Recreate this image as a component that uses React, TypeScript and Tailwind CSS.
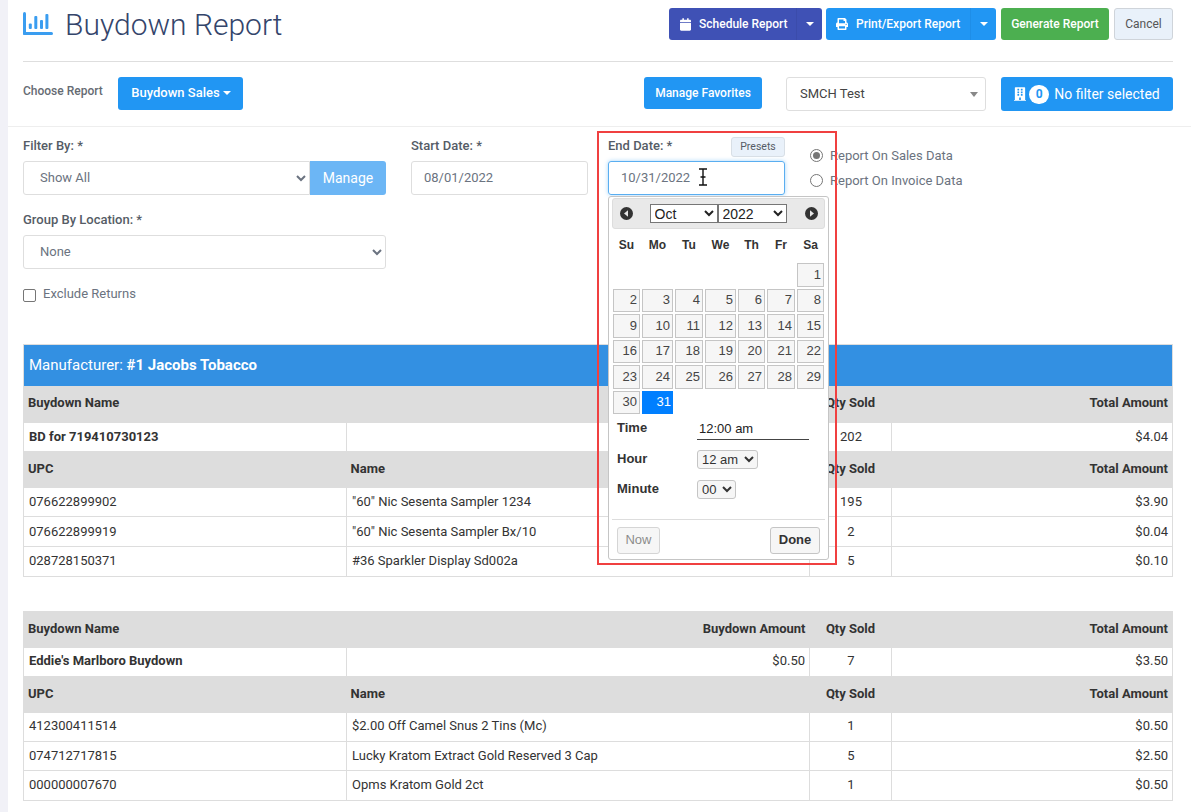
import React from "react";
import { FaCalendar, FaPrint, FaBuilding } from "react-icons/fa";

const Caret = ({ className = "" }: { className?: string }) => (
  <span className={"inline-block w-0 h-0 border-x-[4px] border-x-transparent border-t-[4px] border-t-white " + className} />
);

const Th = ({ children, className = "" }: { children?: React.ReactNode; className?: string }) => (
  <th className={"bg-[#dddddd] pb-[2px] pl-[4px] pr-[4px] pt-0 text-[13px] font-bold text-[#333] " + className}>{children}</th>
);
const Td = ({ children, className = "" }: { children?: React.ReactNode; className?: string }) => (
  <td className={"border border-[#dddddd] py-0 pl-[5px] pr-[4px] text-[13px] text-[#333] " + className}>{children}</td>
);

type Row = [string, string, string, string];

function ReportTable({
  title, name, amount, qty, total, rows, heights, nameRow,
}: {
  title?: string; name: string; amount: string; qty: string; total: string; rows: Row[]; heights: string[]; nameRow: string;
}) {
  return (
    <table className="w-[1149px] table-fixed border-collapse border border-[#dddddd]">
      <colgroup>
        <col className="w-[323px]" />
        <col className="w-[463px]" />
        <col className="w-[82px]" />
        <col className="w-[281px]" />
      </colgroup>
      <tbody>
        {title && (
          <tr className="h-[41px]">
            <td colSpan={4} className="bg-[#3390e2] pb-[1px] pl-[5px] pr-[5px] text-[15px] text-white">
              Manufacturer: <b className="font-bold">{title}</b>
            </td>
          </tr>
        )}
        <tr className={title ? "h-[37px]" : "h-[36px]"}>
          <Th className="text-left">Buydown Name</Th>
          <Th className="text-right">Buydown Amount</Th>
          <Th className="text-center">Qty Sold</Th>
          <Th className="text-right">Total Amount</Th>
        </tr>
        <tr className={nameRow}>
          <Td className="font-bold">{name}</Td>
          <Td className="text-right">{amount}</Td>
          <Td className="text-center">{qty}</Td>
          <Td className="text-right">{total}</Td>
        </tr>
        <tr className="h-[36px]">
          <Th className="text-left">UPC</Th>
          <Th className="text-left">Name</Th>
          <Th className="text-center">Qty Sold</Th>
          <Th className="text-right">Total Amount</Th>
        </tr>
        {rows.map((r, i) => (
          <tr key={r[0]} className={heights[i]}>
            <Td>{r[0]}</Td>
            <Td>{r[1]}</Td>
            <Td className="text-center">{r[2]}</Td>
            <Td className="text-right">{r[3]}</Td>
          </tr>
        ))}
      </tbody>
    </table>
  );
}

const days = ["Su", "Mo", "Tu", "We", "Th", "Fr", "Sa"];

function CircleArrow({ dir }: { dir: "l" | "r" }) {
  return (
    <svg width="13" height="13" viewBox="0 0 13 13">
      <circle cx="6.5" cy="6.5" r="6.5" fill="#333" />
      <path d={dir === "l" ? "M8 3.2 L4 6.5 L8 9.8 Z" : "M5 3.2 L9 6.5 L5 9.8 Z"} fill="#e8e8e8" />
    </svg>
  );
}

function Calendar() {
  const cells: (number | null)[] = [null, null, null, null, null, null, 1];
  for (let d = 2; d <= 31; d++) cells.push(d);
  return (
    <div className="absolute left-[608px] top-[196px] z-10 h-[364px] w-[221px] rounded-[3px] border border-[#c5c5c5] bg-white px-[3px] pt-[1px] font-['Liberation_Sans',sans-serif] text-[#333]">
      <div className="flex h-[31px] items-center justify-between rounded-[3px] border border-[#ddd] bg-[#e9e9e9] pl-[7px] pr-[6px]">
        <CircleArrow dir="l" />
        <div className="mr-[2px] flex">
          <select defaultValue="Oct" className="h-[19px] w-[68px] border border-[#767676] bg-white text-[14px] leading-none text-[#222]">
            <option>Oct</option>
          </select>
          <select defaultValue="2022" className="h-[19px] w-[69px] border border-[#767676] bg-white text-[14px] leading-none text-[#222]">
            <option>2022</option>
          </select>
        </div>
        <CircleArrow dir="r" />
      </div>
      <div className="ml-[1px] mb-[2px] grid h-[32px] grid-cols-[27px_31px_28px_31px_27px_28px_27px] gap-x-[2px]">
        {days.map((d) => (
          <div key={d} className="flex items-center justify-center text-[12px] font-bold">{d}</div>
        ))}
      </div>
      <div className="ml-[1px] grid grid-cols-[27px_31px_28px_31px_27px_28px_27px] gap-x-[2px] gap-y-[2px] [grid-auto-rows:23.5px]">
        {cells.map((c, i) =>
          c === null ? (
            <div key={i} />
          ) : c === 31 ? (
            <div key={i} className="flex items-center justify-end bg-[#007fff] pb-[1px] pr-[2px] text-[13px] text-white">{c}</div>
          ) : (
            <div key={i} className="flex items-center justify-end border border-[#c5c5c5] bg-[#f6f6f6] pb-[1px] pr-[2px] text-[13px] text-[#454545]">{c}</div>
          )
        )}
      </div>
      <div className="flex h-[26px] items-start pl-[5px]">
        <span className="mt-[6px] w-[80px] text-[13px] font-bold leading-[16px]">Time</span>
        <span className="flex h-[26px] w-[112px] items-center border-b border-[#444] pl-[2px] pt-[5px] text-[13px] text-[#222]">12:00 am</span>
      </div>
      <div className="mt-[4px] flex h-[30px] items-center pl-[5px]">
        <span className="w-[80px] text-[13px] font-bold">Hour</span>
        <select defaultValue="12 am" className="h-[19px] w-[61px] rounded-[3px] border border-[#c5c5c5] bg-[#f6f6f6] text-[13px] text-[#333]">
          <option>12 am</option>
        </select>
      </div>
      <div className="flex h-[30px] items-center pl-[5px]">
        <span className="w-[80px] text-[13px] font-bold">Minute</span>
        <select defaultValue="00" className="h-[19px] w-[39px] rounded-[3px] border border-[#c5c5c5] bg-[#f6f6f6] text-[13px] text-[#333]">
          <option>00</option>
        </select>
      </div>
      <div className="mt-[15px] flex items-center justify-between border-t border-[#ddd] px-[5px] pt-[7px]">
        <button className="h-[27px] w-[43px] rounded-[3px] border border-[#d5d5d5] bg-[#f6f6f6] pb-[2px] text-[13px] font-normal text-[#8c8c8c]">Now</button>
        <button className="h-[27px] w-[50px] rounded-[3px] border border-[#c5c5c5] bg-[#f6f6f6] pb-[2px] text-[13px] font-bold text-[#333]">Done</button>
      </div>
    </div>
  );
}

const Label = ({ children }: { children: React.ReactNode }) => (
  <div className="text-[13px] font-medium leading-[16px] text-[#555c66]">{children}</div>
);

export default function App() {
  return (
    <div className="relative flex h-[812px] w-[1191px] overflow-hidden bg-white font-['Roboto',sans-serif]">
      <div className="w-[8px] shrink-0 bg-[#f1f1f7]" />
      <div className="flex min-w-0 flex-1 flex-col">
        <div className="h-[127px] shrink-0 border-b border-[#eeeeee] pl-[15px] pr-[18px]">
          <div className="flex h-[62px] items-start justify-between border-b border-[#dedede]">
            <div className="flex items-start">
              <svg width="30" height="23" viewBox="0 0 30 23" className="mt-[12px]" fill="#3a9df0">
                <rect x="0" y="0" width="3" height="23" rx="1.5" />
                <rect x="0" y="20" width="30" height="3" rx="1.5" />
                <rect x="5.8" y="11.5" width="3" height="5.5" rx="1" />
                <rect x="11.3" y="4" width="3" height="13" rx="1" />
                <rect x="17" y="8" width="3" height="9" rx="1" />
                <rect x="22.4" y="2" width="3" height="15" rx="1" />
              </svg>
              <h1 className="ml-[13px] mt-[7px] -translate-x-[1px] text-[30px] font-light leading-[36px] text-[#34456b]">Buydown Report</h1>
            </div>
            <div className="mt-[8px] flex items-center text-[12px] font-medium text-white">
              <div className="flex h-[32px] w-[153px] items-center rounded-[3px] bg-[#3f51b5]">
                <FaCalendar className="ml-[11px] h-[13px] w-[11px]" />
                <span className="ml-[8px] flex-1">Schedule Report</span>
                <span className="flex h-full w-[26px] items-center justify-center border-l border-[#3b4cab]"><Caret /></span>
              </div>
              <div className="ml-[4px] flex h-[32px] w-[170px] items-center rounded-[3px] bg-[#2196f3]">
                <FaPrint className="ml-[10px] h-[12px] w-[12px]" />
                <span className="ml-[8px] flex-1">Print/Export Report</span>
                <span className="flex h-full w-[26px] items-center justify-center border-l border-[#1e8ee8]"><Caret /></span>
              </div>
              <button className="ml-[5px] h-[32px] w-[108px] rounded-[3px] bg-[#4caf50] text-[12px] font-medium text-white">Generate Report</button>
              <button className="ml-[5px] h-[32px] w-[59px] rounded-[3px] border border-[#cfd4da] bg-[#e9f1fa] text-[12px] font-normal text-[#555]">Cancel</button>
            </div>
          </div>
          <div className="mt-[15px] flex items-start">
            <div className="mt-[5px] w-[95px] text-[12px] font-medium text-[#666b73]">Choose Report</div>
            <button className="flex h-[33px] w-[125px] items-center justify-center rounded-[3px] bg-[#2196f3] pb-[1px] pl-[1px] text-[13px] font-medium text-white">
              Buydown Sales<Caret className="ml-[3px]" />
            </button>
            <button className="ml-[401px] h-[32px] w-[118px] rounded-[3px] bg-[#2196f3] text-[12px] font-medium text-white">Manage Favorites</button>
            <div className="ml-[24px] flex h-[34px] w-[200px] items-center justify-between rounded-[3px] border border-[#dedede] bg-white pl-[13px] pr-[7px] text-[13px] text-[#444]">
              SMCH Test
              <span className="h-0 w-0 border-x-[4px] border-t-[5px] border-x-transparent border-t-[#888]" />
            </div>
            <button className="ml-[15px] flex h-[34px] w-[172px] items-center justify-center rounded-[3px] bg-[#2196f3] text-[14px] text-white">
              <FaBuilding className="h-[14px] w-[12px]" />
              <span className="ml-[3px] mr-[5px] flex h-[19px] w-[20px] items-center justify-center rounded-full bg-white text-[12px] font-bold text-[#2196f3]">0</span>
              No filter selected
            </button>
          </div>
        </div>

        <div className="flex h-[217px] shrink-0 pl-[15px] text-[13px]">
          <div className="w-[363px] pt-[11px]">
            <Label>Filter By: *</Label>
            <div className="mt-[7px] flex h-[34px]">
              <select defaultValue="Show All" className="h-full w-[287px] rounded-l-[3px] border border-[#dedede] bg-white pb-[2px] pl-[12px] text-[13px] text-[#6b7380]">
                <option>Show All</option>
              </select>
              <button className="h-full w-[76px] rounded-r-[3px] bg-[#6cb6f5] text-[14px] text-white">Manage</button>
            </div>
            <div className="mt-[17px]"><Label>Group By Location: *</Label></div>
            <select defaultValue="None" className="mt-[7px] h-[34px] w-[363px] rounded-[3px] border border-[#dedede] bg-white pb-[2px] pl-[12px] text-[13px] text-[#6b7380]">
              <option>None</option>
            </select>
            <div className="mt-[17px] flex items-start">
              <span className="mt-[3px] h-[13px] w-[13px] rounded-[2px] border border-[#767676] bg-white" />
              <span className="ml-[7px] text-[13px] leading-[16px] text-[#6b7380]">Exclude Returns</span>
            </div>
          </div>
          <div className="ml-[25px] w-[177px] pt-[11px]">
            <Label>Start Date: *</Label>
            <div className="mt-[7px] flex h-[34px] items-center rounded-[3px] border border-[#dedede] pl-[12px] text-[#6b7380]">08/01/2022</div>
          </div>
          <div className="relative ml-[20px] w-[177px] pt-[11px]">
            <Label>End Date: *</Label>
            <button className="absolute right-0 top-[10px] h-[20px] w-[54px] rounded-[3px] border border-[#d8dfe6] bg-[#e9f1fa] text-[10.5px] text-[#555c66]">Presets</button>
            <div className="mt-[7px] flex h-[34px] items-center rounded-[3px] border border-[#5aaef0] pl-[12px] text-[#6b7380] shadow-[0_0_4px_rgba(33,150,243,0.4)]">10/31/2022</div>
          </div>
          <div className="ml-[25px] pt-[16px] text-[13px] text-[#6b7380]">
            <div className="flex h-[25px] items-center">
              <span className="flex h-[13px] w-[13px] items-center justify-center rounded-full border border-[#767676] bg-white">
                <span className="h-[7px] w-[7px] rounded-full bg-[#777]" />
              </span>
              <span className="ml-[7px]">Report On Sales Data</span>
            </div>
            <div className="flex h-[25px] items-center">
              <span className="h-[13px] w-[13px] rounded-full border border-[#767676] bg-white" />
              <span className="ml-[7px]">Report On Invoice Data</span>
            </div>
          </div>
        </div>

        <div className="pl-[15px]">
          <ReportTable
            title="#1 Jacobs Tobacco"
            name="BD for 719410730123"
            amount="$0.02"
            qty="202"
            total="$4.04"
            nameRow="h-[29px]"
            heights={["h-[29px]", "h-[30px]", "h-[30px] [&>td]:pb-[2px]"]}
            rows={[
              ["076622899902", "\"60\" Nic Sesenta Sampler 1234", "195", "$3.90"],
              ["076622899919", "\"60\" Nic Sesenta Sampler Bx/10", "2", "$0.04"],
              ["028728150371", "#36 Sparkler Display Sd002a", "5", "$0.10"],
            ]}
          />
          <div className="h-[34px]" />
          <ReportTable
            name="Eddie's Marlboro Buydown"
            amount="$0.50"
            qty="7"
            total="$3.50"
            nameRow="h-[29px] [&>td]:pb-[2px]"
            heights={["h-[29px] [&>td]:pb-[2px]", "h-[29px]", "h-[30px] [&>td]:pb-[2px]"]}
            rows={[
              ["412300411514", "$2.00 Off Camel Snus 2 Tins (Mc)", "1", "$0.50"],
              ["074712717815", "Lucky Kratom Extract Gold Reserved 3 Cap", "5", "$2.50"],
              ["000000007670", "Opms Kratom Gold 2ct", "1", "$0.50"],
            ]}
          />
        </div>
      </div>

      <Calendar />
      <div className="pointer-events-none absolute left-[597px] top-[131px] z-20 h-[434px] w-[240px] border-2 border-[#f04040]" />
      <svg className="absolute left-[697px] top-[168px] z-20" width="12" height="18" viewBox="0 0 12 18" fill="none" stroke="#111" strokeWidth="1.4">
        <path d="M2 1h8M6 1v16M2 17h8M3.5 9h5" />
      </svg>
    </div>
  );
}
